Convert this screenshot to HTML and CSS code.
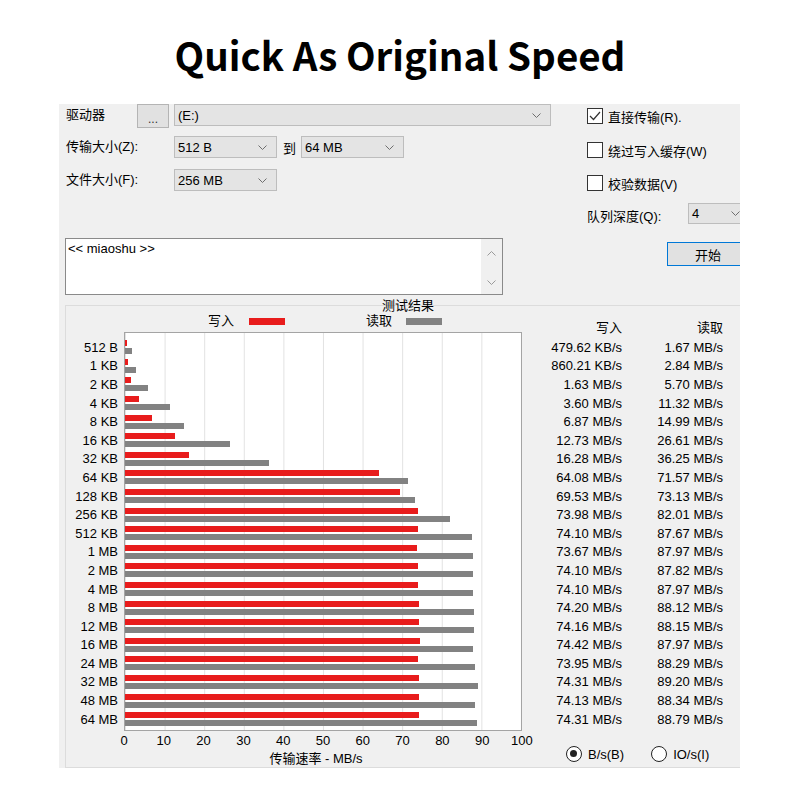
FILE: index.html
```html
<!DOCTYPE html>
<html lang="zh">
<head>
<meta charset="UTF-8">
<meta name="viewport" content="width=device-width, initial-scale=1.0">
<title>Quick As Original Speed</title>
<link rel="stylesheet" href="styles.css">
</head>
<body>
<h1 class="title">Quick As Original Speed</h1>
<div class="window">
  <div class="top">
    <div class="settings">
      <div class="row row-drive">
        <span class="label label-drive">驱动器</span>
        <button class="browse">...</button>
        <div class="combo combo-drive">(E:)<svg class="chev" width="9" height="5" viewBox="0 0 9 5"><polyline points="0.5,0.5 4.5,4.5 8.5,0.5"/></svg></div>
      </div>
      <div class="row">
        <span class="label">传输大小(Z):</span>
        <div class="combo">512 B<svg class="chev" width="9" height="5" viewBox="0 0 9 5"><polyline points="0.5,0.5 4.5,4.5 8.5,0.5"/></svg></div>
        <span class="to">到</span>
        <div class="combo">64 MB<svg class="chev" width="9" height="5" viewBox="0 0 9 5"><polyline points="0.5,0.5 4.5,4.5 8.5,0.5"/></svg></div>
      </div>
      <div class="row">
        <span class="label">文件大小(F):</span>
        <div class="combo">256 MB<svg class="chev" width="9" height="5" viewBox="0 0 9 5"><polyline points="0.5,0.5 4.5,4.5 8.5,0.5"/></svg></div>
      </div>
      <div class="memo">
        <div class="memo-text">&lt;&lt; miaoshu &gt;&gt;</div>
        <div class="scrollbar">
          <svg width="9" height="5" viewBox="0 0 9 5"><polyline points="0.5,4.5 4.5,0.5 8.5,4.5"/></svg>
          <svg width="9" height="5" viewBox="0 0 9 5"><polyline points="0.5,0.5 4.5,4.5 8.5,0.5"/></svg>
        </div>
      </div>
    </div>
    <div class="options">
      <div class="check check-first"><span class="box"><svg width="14" height="14" viewBox="0 0 14 14"><polyline points="2,7 5.5,10.5 12,3"/></svg></span>直接传输(R).</div>
      <div class="check"><span class="box"></span>绕过写入缓存(W)</div>
      <div class="check"><span class="box"></span>校验数据(V)</div>
      <div class="queue">
        <span class="queue-label">队列深度(Q):</span>
        <div class="combo combo-queue">4<svg class="chev" width="9" height="5" viewBox="0 0 9 5"><polyline points="0.5,0.5 4.5,4.5 8.5,0.5"/></svg></div>
      </div>
      <button class="start">开始</button>
    </div>
  </div>

  <div class="results">
    <div class="legend">
      <div class="legend-title">测试结果</div>
      <div class="legend-items">
        <span>写入</span><i class="swatch swatch-write"></i>
        <span class="legend-read">读取</span><i class="swatch swatch-read"></i>
      </div>
    </div>
    <div class="values-head"><span>写入</span><span>读取</span></div>
    <div class="sizes" id="sizes"></div>
    <div class="plot" id="plot"></div>
    <div class="values" id="values"></div>
    <div class="axis">
      <div class="ticks">
        <span>0</span><span>10</span><span>20</span><span>30</span><span>40</span><span>50</span>
        <span>60</span><span>70</span><span>80</span><span>90</span><span>100</span>
      </div>
      <div class="axis-title">传输速率 - MB/s</div>
    </div>
    <div class="units">
      <span class="radio on"></span><span class="radio-text">B/s(B)</span>
      <span class="radio"></span><span class="radio-text">IO/s(I)</span>
    </div>
  </div>
</div>

<script>
    // size, write text, read text, write MB/s, read MB/s
    const rows = [
        ['512 B', '479.62 KB/s', '1.67 MB/s', 0.47, 1.67],
        ['1 KB', '860.21 KB/s', '2.84 MB/s', 0.84, 2.84],
        ['2 KB', '1.63 MB/s', '5.70 MB/s', 1.63, 5.70],
        ['4 KB', '3.60 MB/s', '11.32 MB/s', 3.60, 11.32],
        ['8 KB', '6.87 MB/s', '14.99 MB/s', 6.87, 14.99],
        ['16 KB', '12.73 MB/s', '26.61 MB/s', 12.73, 26.61],
        ['32 KB', '16.28 MB/s', '36.25 MB/s', 16.28, 36.25],
        ['64 KB', '64.08 MB/s', '71.57 MB/s', 64.08, 71.57],
        ['128 KB', '69.53 MB/s', '73.13 MB/s', 69.53, 73.13],
        ['256 KB', '73.98 MB/s', '82.01 MB/s', 73.98, 82.01],
        ['512 KB', '74.10 MB/s', '87.67 MB/s', 74.10, 87.67],
        ['1 MB', '73.67 MB/s', '87.97 MB/s', 73.67, 87.97],
        ['2 MB', '74.10 MB/s', '87.82 MB/s', 74.10, 87.82],
        ['4 MB', '74.10 MB/s', '87.97 MB/s', 74.10, 87.97],
        ['8 MB', '74.20 MB/s', '88.12 MB/s', 74.20, 88.12],
        ['12 MB', '74.16 MB/s', '88.15 MB/s', 74.16, 88.15],
        ['16 MB', '74.42 MB/s', '87.97 MB/s', 74.42, 87.97],
        ['24 MB', '73.95 MB/s', '88.29 MB/s', 73.95, 88.29],
        ['32 MB', '74.31 MB/s', '89.20 MB/s', 74.31, 89.20],
        ['48 MB', '74.13 MB/s', '88.34 MB/s', 74.13, 88.34],
        ['64 MB', '74.31 MB/s', '88.79 MB/s', 74.31, 88.79]
    ];

    const sizes = document.getElementById('sizes');
    const plot = document.getElementById('plot');
    const values = document.getElementById('values');

    rows.forEach(function(r) {
        const size = document.createElement('div');
        size.textContent = r[0];
        sizes.appendChild(size);

        const bars = document.createElement('div');
        bars.className = 'bars';
        const w = document.createElement('div');
        w.className = 'bar bar-write';
        w.style.width = r[3] + '%';
        const rd = document.createElement('div');
        rd.className = 'bar bar-read';
        rd.style.width = r[4] + '%';
        bars.appendChild(w);
        bars.appendChild(rd);
        plot.appendChild(bars);

        const a = document.createElement('div');
        a.textContent = r[1];
        const b = document.createElement('div');
        b.textContent = r[2];
        values.appendChild(a);
        values.appendChild(b);
    });
</script>
</body>
</html>
```

FILE: styles.css
```css
body, html {
    margin: 0;
    background: #ffffff;
    font-family: "Liberation Sans", "Noto Sans CJK SC", sans-serif;
    font-size: 13px;
    color: #000000;
}
.title {
    height: 104px;
    margin: 0;
    display: flex;
    justify-content: center;
    align-items: center;
    font-family: "Noto Sans CJK SC", sans-serif;
    font-weight: 700;
    font-size: 38.5px;
    padding-top: 3px;
    box-sizing: border-box;
}
.window {
    width: 681px;
    height: 664px;
    margin-left: 59px;
    background: #f0f0f0;
    overflow: hidden;
}
.top {
    display: flex;
    align-items: flex-start;
}
.settings {
    flex: 0 0 528px;
    box-sizing: border-box;
    padding-left: 7px;
}
.row {
    display: flex;
    align-items: center;
    height: 22px;
    margin-top: 11px;
}
.row-drive {
    align-items: flex-start;
    height: 24px;
    margin-top: 0;
}
.row-drive + .row {
    margin-top: 8px;
}
.label {
    width: 108px;
    line-height: 22px;
}
.label-drive {
    width: 71px;
}
.browse {
    width: 32px;
    height: 24px;
    margin: 0 5px 0 0;
    padding: 6px 0 0;
    background: #e1e1e1;
    border: 1px solid #b4b4b4;
    font-family: "Liberation Sans", sans-serif;
    font-size: 12px;
    line-height: 12px;
    color: #333;
}
.combo {
    width: 103px;
    height: 22px;
    box-sizing: border-box;
    display: flex;
    justify-content: space-between;
    align-items: center;
    padding: 0 9px 0 3px;
    background: #e4e4e4;
    border: 1px solid #bdbdbd;
}
.combo-drive {
    width: 377px;
}
.combo-queue {
    width: 62px;
    flex: none;
}
.chev {
    fill: none;
    stroke: #6e6e6e;
    stroke-width: 1;
}
.to {
    margin: 0 5px 0 6px;
}
.memo {
    display: flex;
    width: 438px;
    height: 57px;
    margin: 47px 0 0 -1px;
    box-sizing: border-box;
    border: 1px solid #8a8a8a;
    background: #ffffff;
}
.memo-text {
    flex: 1;
    padding: 2px 0 0 2px;
}
.scrollbar {
    width: 21px;
    background: #f0f0f0;
    display: flex;
    flex-direction: column;
    justify-content: space-between;
    align-items: center;
    padding: 12px 0 9px;
    box-sizing: border-box;
}
.scrollbar svg {
    fill: none;
    stroke: #9a9a9a;
    stroke-width: 1;
}
.options {
    flex: 1;
    padding-top: 4px;
}
.check {
    display: flex;
    align-items: center;
    height: 16px;
    margin-top: 18px;
    white-space: nowrap;
}
.check-first {
    margin-top: 0;
}
.check + .check + .check {
    margin-top: 17px;
}
.box {
    width: 16px;
    height: 16px;
    box-sizing: border-box;
    border: 1px solid #333333;
    background: #ffffff;
    margin-right: 5px;
    flex: none;
}
.box svg {
    display: block;
    fill: none;
    stroke: #333333;
    stroke-width: 1.2;
}
.queue {
    display: flex;
    align-items: flex-start;
    margin-top: 12px;
    height: 21px;
}
.queue .combo-queue {
    height: 21px;
}
.queue-label {
    width: 101px;
    flex: none;
    padding-top: 3px;
    white-space: nowrap;
}
.start {
    display: block;
    width: 82px;
    height: 24px;
    margin: 18px 0 0 80px;
    padding: 0;
    background: #e1e1e1;
    border: 1px solid #0078d7;
    font-family: "Noto Sans CJK SC", sans-serif;
    font-size: 13px;
    color: #000;
}
.results {
    display: grid;
    grid-template-columns: 58px 398px 1fr;
    grid-template-rows: 26px 399px 36px;
    width: 700px;
    margin: 10px 0 0 6px;
    border: 1px solid #dcdcdc;
    box-sizing: border-box;
}
.legend {
    grid-column: 1 / 3;
    grid-row: 1;
}
.legend-title {
    margin-top: -8px;
    padding-left: 316px;
    line-height: 16px;
}
.legend-items {
    display: flex;
    align-items: center;
    padding-left: 142px;
    line-height: 14px;
}
.swatch {
    width: 36px;
    height: 7px;
    margin-left: 15px;
}
.swatch-write {
    background: #e81c1c;
}
.swatch-read {
    background: #828282;
    margin-left: 14px;
}
.legend-read {
    margin-left: 81px;
}
.values-head {
    grid-column: 3;
    grid-row: 1;
    align-self: end;
    margin-bottom: -3px;
    display: grid;
    grid-template-columns: 100px 101px;
    text-align: right;
    line-height: 14px;
}
.sizes {
    grid-column: 1;
    grid-row: 2;
    display: grid;
    grid-template-rows: repeat(21, 18.6px);
    align-items: center;
    padding: 6px 6px 0 0;
    text-align: right;
    white-space: nowrap;
}
.plot {
    grid-column: 2;
    grid-row: 2;
    display: grid;
    grid-template-rows: repeat(21, 18.6px);
    padding-top: 5px;
    border: 1px solid #a4a4a4;
    background-color: #ffffff;
    background-image: linear-gradient(to right, #e2e2e2 1px, transparent 1px);
    background-size: 10% 100%;
}
.bars {
    display: flex;
    flex-direction: column;
    justify-content: center;
    gap: 2px;
}
.bar {
    height: 6px;
}
.bar-write {
    background: #e81c1c;
}
.bar-read {
    background: #828282;
}
.values {
    grid-column: 3;
    grid-row: 2;
    display: grid;
    grid-template-columns: 100px 101px;
    grid-template-rows: repeat(21, 18.6px);
    align-items: center;
    padding-top: 6px;
    text-align: right;
    white-space: nowrap;
}
.axis {
    grid-column: 2;
    grid-row: 3;
}
.ticks {
    display: flex;
    justify-content: space-between;
    width: 428px;
    margin-left: -15px;
    line-height: 20px;
}
.ticks span {
    width: 30px;
    text-align: center;
}
.axis-title {
    text-align: center;
    line-height: 16px;
    padding-right: 14px;
}
.units {
    grid-column: 3;
    grid-row: 3;
    display: flex;
    align-items: center;
    padding: 15px 0 0 44px;
    height: 16px;
}
.radio {
    width: 16px;
    height: 16px;
    box-sizing: border-box;
    border: 1.5px solid #222;
    border-radius: 50%;
    background: #ffffff;
    margin-right: 6px;
    position: relative;
}
.radio.on::after {
    content: "";
    position: absolute;
    left: 3px;
    top: 3px;
    width: 7px;
    height: 7px;
    border-radius: 50%;
    background: #222;
}
.radio-text {
    margin-right: 27px;
}
```
